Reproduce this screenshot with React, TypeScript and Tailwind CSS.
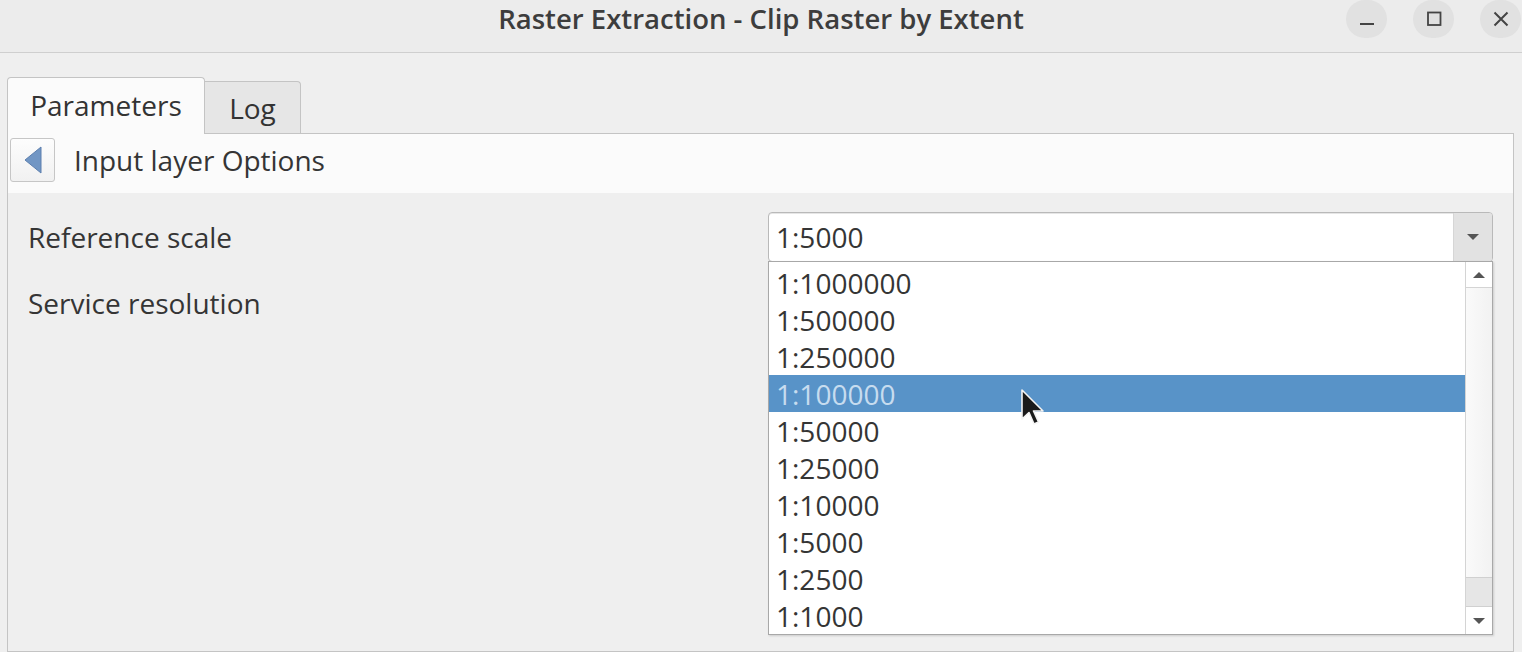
import React from 'react';

const scales = [
  '1:1000000',
  '1:500000',
  '1:250000',
  '1:100000',
  '1:50000',
  '1:25000',
  '1:10000',
  '1:5000',
  '1:2500',
  '1:1000',
];

const font = { fontFamily: '"Open Sans", "Noto Sans", sans-serif' };

const TitleBar: React.FC = () => (
  <div className="h-[53px] grid grid-cols-[1fr_auto_1fr] items-start bg-[#ececec] border-b border-[#cfcfcf]">
    <div />
    <div className="text-[27.5px] leading-[38px] font-semibold text-[#3d3d3d]">
      Raster Extraction - Clip Raster by Extent
    </div>
    <div className="flex justify-end gap-[26px] pr-[1px]">
      <button className="w-[41px] h-[38px] rounded-full bg-[#e1e1e1] flex items-center justify-center">
        <svg width="16" height="16" viewBox="0 0 16 16">
          <rect x="1" y="12" width="14" height="2" fill="#444" />
        </svg>
      </button>
      <button className="w-[41px] h-[38px] rounded-full bg-[#e1e1e1] flex items-center justify-center">
        <svg width="16" height="16" viewBox="0 0 16 16">
          <rect x="2" y="1.5" width="12.5" height="12.5" fill="none" stroke="#444" strokeWidth="1.8" />
        </svg>
      </button>
      <button className="w-[41px] h-[38px] rounded-full bg-[#e1e1e1] flex items-center justify-center">
        <svg width="16" height="16" viewBox="0 0 16 16">
          <path d="M1.5 1.5 L14.5 14.5 M14.5 1.5 L1.5 14.5" stroke="#444" strokeWidth="2" />
        </svg>
      </button>
    </div>
  </div>
);

const ScaleDropdown: React.FC = () => (
  <div className="relative -ml-[1px]">
    {/* Combo */}
    <div className="h-[50px] flex bg-white border border-[#b9b9b9] rounded-[4px] shadow-[inset_0_1px_0_#e6e6e6]">
      <div className="flex-1 flex items-center pl-[7px] text-[28px] text-[#353535]">1:5000</div>
      <div className="w-[39px] bg-[#e2e2e2] rounded-r-[3px] flex items-center justify-center border-l border-[#d6d6d6]">
        <svg width="14" height="8" viewBox="0 0 14 8">
          <path d="M1 1 L13 1 L7 7 Z" fill="#555" />
        </svg>
      </div>
    </div>

    {/* Popup list */}
    <div className="absolute left-0 right-0 top-[49px] h-[374px] flex bg-white border border-[#a8a8a8] shadow-[1px_1px_2px_rgba(0,0,0,0.15)]">
      <div className="flex-1 pt-[2px]">
        {scales.map((s, i) => (
          <div
            key={s}
            className={`h-[37px] flex items-center pl-[7px] text-[28px] ${
              i === 3 ? 'bg-[#5893c8] text-[#c7dcef]' : 'text-[#353535]'
            }`}
          >
            {s}
          </div>
        ))}
      </div>
      <div className="w-[27px] flex flex-col border-l border-[#d4d4d4] bg-gradient-to-r from-[#fafafa] to-[#f2f2f2]">
        <div className="h-[26px] flex items-center justify-center border-b border-[#d4d4d4] bg-white">
          <svg width="14" height="8" viewBox="0 0 14 8">
            <path d="M1 7 L13 7 L7 1 Z" fill="#555" />
          </svg>
        </div>
        <div className="flex-1" />
        <div className="h-[30px] bg-[#e6e6e6] border-y border-[#d0d0d0]" />
        <div className="h-[27px] flex items-center justify-center bg-white">
          <svg width="14" height="8" viewBox="0 0 14 8">
            <path d="M1 1 L13 1 L7 7 Z" fill="#555" />
          </svg>
        </div>
      </div>
    </div>

    {/* Mouse pointer */}
    <svg
      className="absolute left-[252px] top-[177px]"
      width="26"
      height="40"
      viewBox="0 0 26 40"
    >
      <path
        d="M2 1 L2 30 L9 23.5 L14 35 L18.5 33 L13.5 22 L23 22 Z"
        fill="#1a1a1a"
        stroke="#f4f4f4"
        strokeWidth="1.6"
        strokeLinejoin="round"
      />
    </svg>
  </div>
);

export default function App() {
  return (
    <div className="w-[1522px] h-[652px] overflow-hidden bg-[#efefef] flex flex-col" style={font}>
      <TitleBar />

      <div className="flex-1 flex flex-col pl-[7px] pr-[8px] pt-[24px]">
        {/* Tabs */}
        <div className="flex items-end h-[56px]">
          <div className="h-[57px] -mb-[1px] w-[198px] flex items-center justify-center pb-[2px] bg-[#fbfbfb] border border-b-0 border-[#c4c4c4] rounded-t-[4px] text-[28px] text-[#333] relative z-10">
            Parameters
          </div>
          <div className="h-[52px] w-[96px] flex items-center justify-center bg-[#e6e6e6] border border-l-0 border-b-0 border-[#c4c4c4] rounded-tr-[4px] text-[28px] text-[#333]">
            Log
          </div>
        </div>

        {/* Tab pane */}
        <div className="flex-1 flex flex-col border border-[#c4c4c4]">
          <div className="h-[59px] flex items-center gap-[19px] bg-[#fbfbfb] pl-[2px] pb-[8px]">
            <button className="w-[45px] h-[44px] flex items-center justify-center rounded-[3px] border border-[#c6c6c6] bg-gradient-to-b from-[#fdfdfd] to-[#f1f1f1]">
              <svg width="20" height="28" viewBox="0 0 20 28">
                <path d="M18 1 L18 27 L2 14 Z" fill="#7196c4" stroke="#5c7fae" strokeWidth="1" strokeLinejoin="round" />
              </svg>
            </button>
            <span className="text-[28px] leading-[40px] text-[#353535]">Input layer Options</span>
          </div>

          <div className="flex-1 bg-[#efefef] px-[20px] pt-[19px] grid grid-cols-[1fr_724px] content-start gap-y-[16px]">
            <div className="h-[50px] flex items-center text-[28px] text-[#353535]">Reference scale</div>
            <ScaleDropdown />
            <div className="h-[50px] flex items-center text-[28px] text-[#353535]">Service resolution</div>
            <div />
          </div>
        </div>
      </div>
    </div>
  );
}
